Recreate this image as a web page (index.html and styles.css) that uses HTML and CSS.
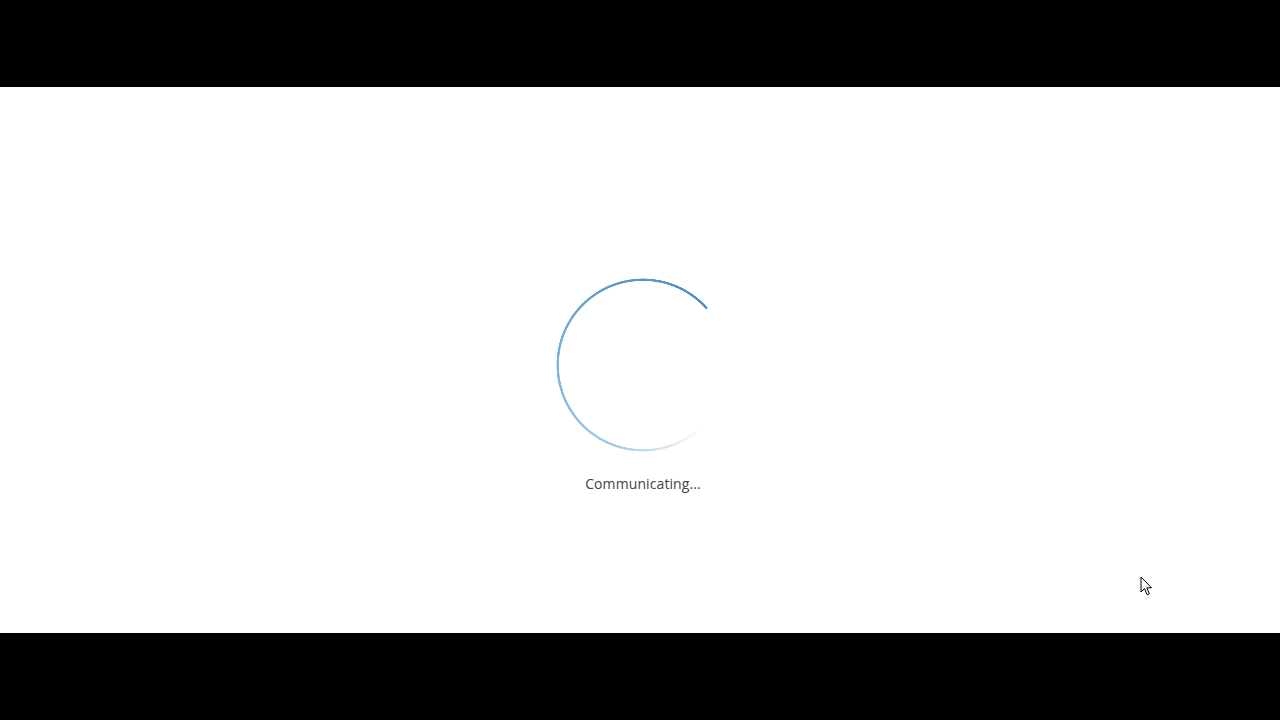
FILE: index.html
```html
<!DOCTYPE html>
<html lang="en">
<head>
    <meta charset="UTF-8">
    <meta name="viewport" content="width=device-width, initial-scale=1.0">
    <title>Communicating</title>
    <link rel="stylesheet" href="styles.css">
</head>
<body>
    <div class="barra"></div>
    <main class="tela">
        <div class="carregando">
            <div class="anel"></div>
            <p class="mensagem">Communicating...</p>
        </div>
        <svg class="cursor" width="14" height="21" viewBox="0 0 14 21">
            <path d="M1 1 L1 16 L4.5 12.6 L7.2 18.8 L9.4 17.8 L6.8 11.8 L11.6 11.8 Z" fill="#fff" stroke="#000" stroke-width="1" stroke-linejoin="miter"/>
        </svg>
    </main>
    <div class="barra"></div>
</body>
</html>
```

FILE: styles.css
```css
* {
    box-sizing: border-box;
    padding: 0;
    margin: 0;
}

body {
    background-color: #000;
    width: 1280px;
    height: 720px;
    display: flex;
    flex-direction: column;
    font-family: "Open Sans", "Noto Sans", Arial, sans-serif;
    overflow: hidden;
}

.barra {
    height: 87px;
    background-color: #000;
}

.tela {
    position: relative;
    height: 546px;
    background-color: #fff;
    display: flex;
    justify-content: center;
    padding-top: 191px;
}

.carregando {
    display: flex;
    flex-direction: column;
    align-items: center;
    margin-left: 6px;
}

/* anel com gradiente conico, recortado por mascara radial */
.anel {
    width: 174px;
    height: 174px;
    border-radius: 50%;
    background: conic-gradient(from 136deg,
        rgba(255, 255, 255, 0) 0deg,
        rgba(184, 214, 234, 0.6) 30deg,
        #a9cde6 60deg,
        #7cb5db 130deg,
        #5a9fcf 200deg,
        #478dc4 272deg,
        rgba(255, 255, 255, 0) 273deg);
    -webkit-mask: radial-gradient(circle, transparent 83.8px, #000 84.4px, #000 86.2px, transparent 86.8px);
    mask: radial-gradient(circle, transparent 83.8px, #000 84.4px, #000 86.2px, transparent 86.8px);
}

.mensagem {
    margin-top: 22px;
    font-size: 14px;
    color: #444;
    letter-spacing: 0.1px;
}

.cursor {
    position: absolute;
    left: 1140px;
    top: 489px;
}
```
